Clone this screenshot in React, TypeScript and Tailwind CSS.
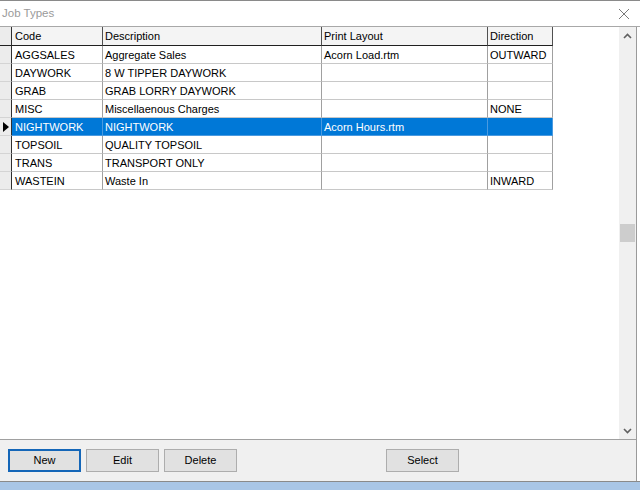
import React from "react";

type Row = { code: string; desc: string; layout: string; dir: string; sel?: boolean };

const rows: Row[] = [
  { code: "AGGSALES", desc: "Aggregate Sales", layout: "Acorn Load.rtm", dir: "OUTWARD" },
  { code: "DAYWORK", desc: "8 W TIPPER DAYWORK", layout: "", dir: "" },
  { code: "GRAB", desc: "GRAB LORRY DAYWORK", layout: "", dir: "" },
  { code: "MISC", desc: "Miscellaenous Charges", layout: "", dir: "NONE" },
  { code: "NIGHTWORK", desc: "NIGHTWORK", layout: "Acorn Hours.rtm", dir: "", sel: true },
  { code: "TOPSOIL", desc: "QUALITY TOPSOIL", layout: "", dir: "" },
  { code: "TRANS", desc: "TRANSPORT ONLY", layout: "", dir: "" },
  { code: "WASTEIN", desc: "Waste In", layout: "", dir: "INWARD" },
];

const widths = ["w-[91px]", "w-[219px]", "w-[166px]", "w-[65px]"];

function Cell({ w, text, sel, pad }: { w: string; text: string; sel?: boolean; pad: string }) {
  return (
    <div
      className={`${w} h-full shrink-0 border-r border-b ${pad} pt-[1px] flex items-center overflow-hidden whitespace-nowrap ${
        sel
          ? "bg-[#0078d7] text-white border-r-[#4a9ae0] border-b-[#4a9ae0]"
          : "text-black border-r-[#a0a0a0] border-b-[#c8c8c8]"
      }`}
    >
      {text}
    </div>
  );
}

function Button({ label, focused }: { label: string; focused?: boolean }) {
  return (
    <div
      className={`w-[73px] h-[23px] shrink-0 flex items-center justify-center bg-[#e1e1e1] text-black ${
        focused ? "border-2 border-[#1466b8]" : "border border-[#adadad]"
      }`}
    >
      {label}
    </div>
  );
}

export default function App() {
  return (
    <div
      className="w-[640px] h-[490px] flex flex-col bg-white text-[11px] overflow-hidden"
      style={{ fontFamily: '"Liberation Sans", Arial, sans-serif' }}
    >
      {/* Title bar */}
      <div className="h-[27px] shrink-0 border-t border-t-[#8a8a8a] border-b border-b-[#a8a8a8] bg-white flex items-center justify-between">
        <span className="pl-[2px] text-[11.5px] text-[#9a9a9a]">Job Types</span>
        <svg width="12" height="12" viewBox="0 0 12 12" className="mr-[10px]">
          <path d="M1 1 L11 11 M11 1 L1 11" stroke="#7a7a7a" strokeWidth="1" fill="none" />
        </svg>
      </div>

      <div className="flex-1 flex min-h-0">
        <div className="w-[637px] shrink-0 border-r border-r-[#9a9a9a] flex flex-col">
          <div className="flex-1 flex min-h-0">
            {/* Grid */}
            <div className="flex-1 bg-white flex flex-col">
              {/* Header */}
              <div className="h-[19px] flex shrink-0">
                <div className="w-[12px] h-full shrink-0 bg-[#ececec] border-r border-r-[#303030] border-b border-b-[#202020]" />
                {["Code", "Description", "Print Layout", "Direction"].map((h, i) => (
                  <div
                    key={h}
                    className={`${widths[i]} h-full shrink-0 bg-[#f4f4f4] border-r border-r-[#505050] border-b border-b-[#202020] ${
                      i === 0 ? "pl-[3px]" : "pl-[2px]"
                    } pt-[1px] flex items-center text-black`}
                  >
                    {h}
                  </div>
                ))}
              </div>
              {rows.map((r) => (
                <div key={r.code} className="h-[18px] flex shrink-0">
                  <div className="w-[12px] h-full shrink-0 bg-[#ececec] border-r border-r-[#303030] border-b border-b-[#d4d4d4] flex items-center pl-[3px]">
                    {r.sel && (
                      <svg width="6" height="10" viewBox="0 0 6 10">
                        <path d="M0 0 L6 5 L0 10 Z" fill="#000" />
                      </svg>
                    )}
                  </div>
                  <Cell w={widths[0]} text={r.code} sel={r.sel} pad="pl-[3px]" />
                  <Cell w={widths[1]} text={r.desc} sel={r.sel} pad="pl-[2px]" />
                  <Cell w={widths[2]} text={r.layout} sel={r.sel} pad="pl-[2px]" />
                  <Cell w={widths[3]} text={r.dir} sel={r.sel} pad="pl-[2px]" />
                </div>
              ))}
            </div>
            {/* Scrollbar */}
            <div className="w-[17px] shrink-0 bg-[#f0f0f0] flex flex-col">
              <div className="h-[17px] flex items-center justify-center">
                <svg width="9" height="6" viewBox="0 0 9 6">
                  <path d="M1 5 L4.5 1.5 L8 5" stroke="#606060" strokeWidth="1.6" fill="none" />
                </svg>
              </div>
              <div className="h-[180px]" />
              <div className="h-[18px] mx-[1px] bg-[#cdcdcd]" />
              <div className="flex-1" />
              <div className="h-[17px] flex items-center justify-center">
                <svg width="9" height="6" viewBox="0 0 9 6">
                  <path d="M1 1 L4.5 4.5 L8 1" stroke="#606060" strokeWidth="1.6" fill="none" />
                </svg>
              </div>
            </div>
          </div>
          {/* Bottom panel */}
          <div className="h-[42px] shrink-0 border-t border-t-[#a0a0a0] bg-[#f0f0f0] flex items-center pl-[8px] gap-[5px]">
            <Button label="New" focused />
            <Button label="Edit" />
            <Button label="Delete" />
            <div className="w-[139px] shrink-0" />
            <Button label="Select" />
          </div>
        </div>
        <div className="flex-1 bg-white" />
      </div>
      <div className="h-[9px] shrink-0 border-t border-t-[#8a8a8a] bg-[#a9c6e6]" />
    </div>
  );
}
